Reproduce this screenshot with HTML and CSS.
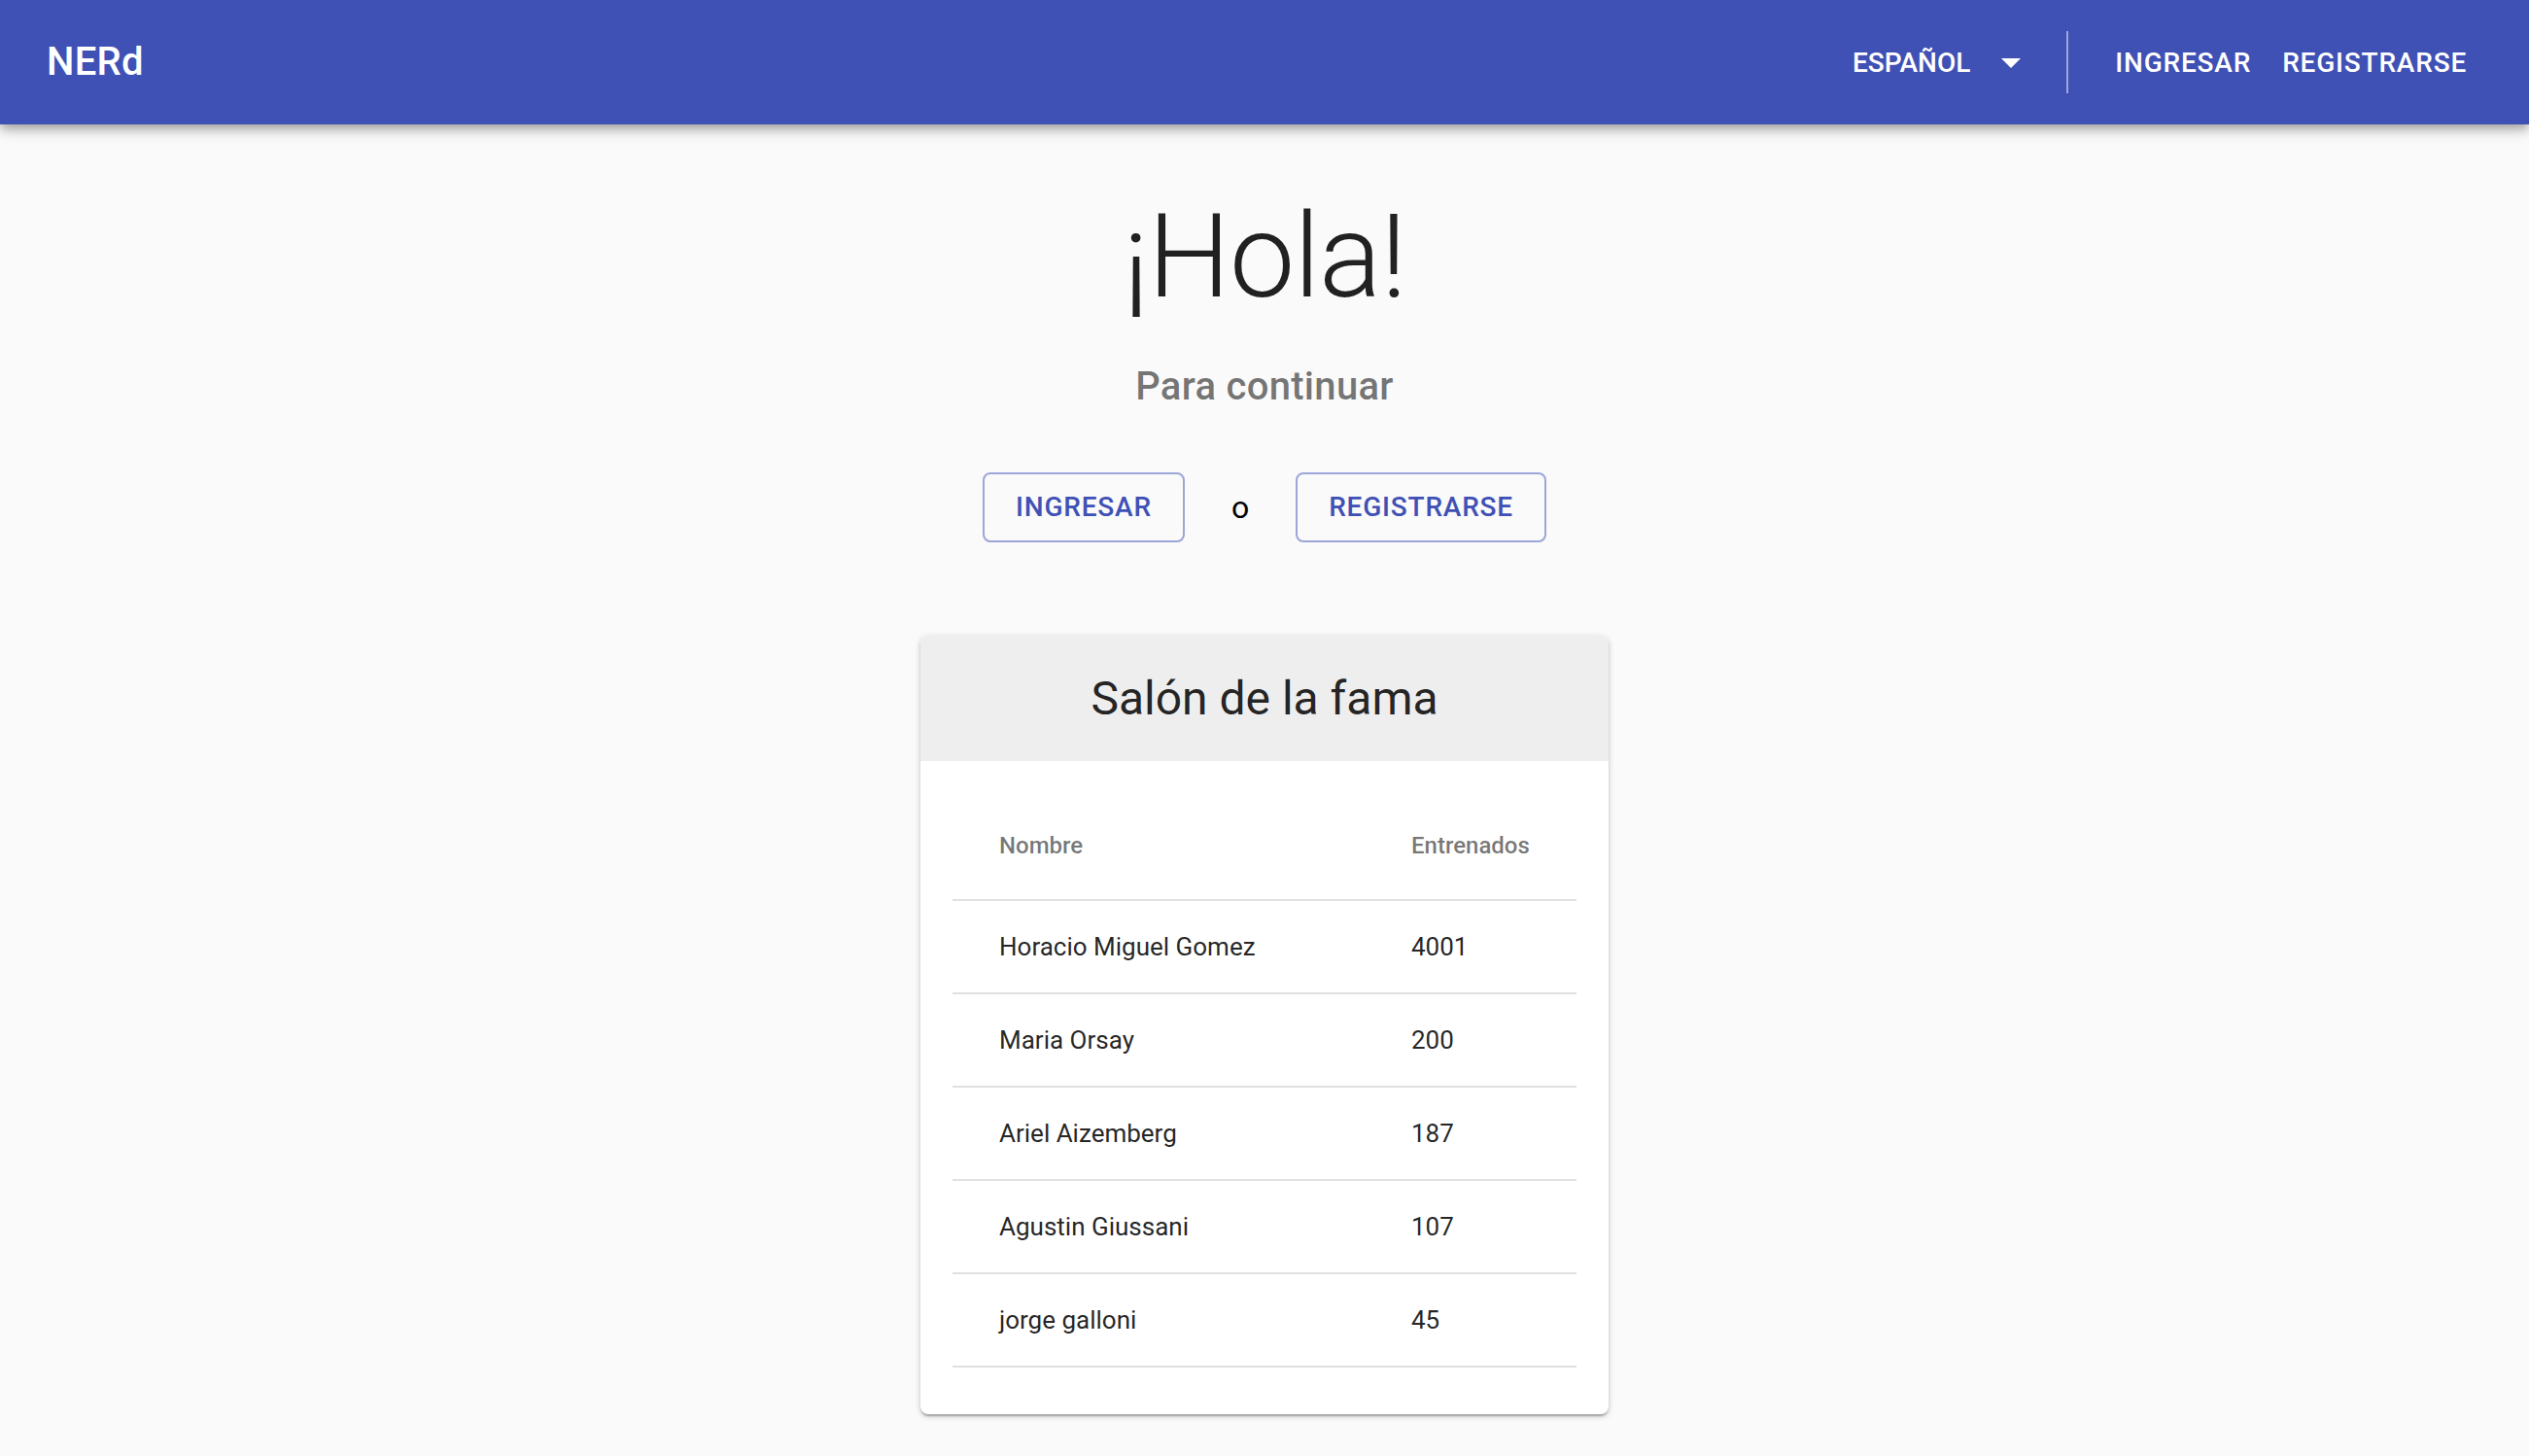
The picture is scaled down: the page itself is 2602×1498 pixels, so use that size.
FILE: index.html
```html
<!DOCTYPE html>
<html lang="es">
<head>
<meta charset="utf-8">
<title>NERd</title>
<link rel="stylesheet" href="styles.css">
</head>
<body>
<header class="appbar">
  <div class="logo">NERd</div>
  <nav class="actions">
    <div class="lang">
      <span class="lang-text">Español</span>
      <svg class="lang-icon" viewBox="0 0 24 24" width="48" height="48" aria-hidden="true"><path d="M7 10l5 5 5-5z" fill="#ffffff"/></svg>
    </div>
    <span class="divider"></span>
    <a class="nav-btn">Ingresar</a>
    <a class="nav-btn">Registrarse</a>
  </nav>
</header>
<main class="main">
  <h1 class="title">¡Hola!</h1>
  <p class="subtitle">Para continuar</p>
  <div class="cta">
    <a class="outlined-btn">Ingresar</a>
    <span class="or">o</span>
    <a class="outlined-btn">Registrarse</a>
  </div>
  <section class="card">
    <div class="card-head">Salón de la fama</div>
    <div class="card-body">
      <table class="fame">
        <colgroup><col class="col-name"><col class="col-num"></colgroup>
        <thead>
          <tr><th>Nombre</th><th>Entrenados</th></tr>
        </thead>
        <tbody>
          <tr><td>Horacio Miguel Gomez</td><td>4001</td></tr>
          <tr><td>Maria Orsay</td><td>200</td></tr>
          <tr><td>Ariel Aizemberg</td><td>187</td></tr>
          <tr><td>Agustin Giussani</td><td>107</td></tr>
          <tr><td>jorge galloni</td><td>45</td></tr>
        </tbody>
      </table>
    </div>
  </section>
</main>
</body>
</html>
```

FILE: styles.css
```css
* { box-sizing: border-box; }
html, body {
  margin: 0;
  padding: 0;
  background: #fafafa;
  font-family: Roboto, "Noto Sans", "Liberation Sans", sans-serif;
  color: rgba(0, 0, 0, 0.87);
}
.appbar {
  position: relative;
  z-index: 2;
  height: 128px;
  display: flex;
  align-items: center;
  padding: 0 48px 0 48px;
  background: #3f51b5;
  color: #fff;
  box-shadow: 0px 4px 8px -2px rgba(0,0,0,0.2), 0px 8px 10px 0px rgba(0,0,0,0.14), 0px 2px 20px 0px rgba(0,0,0,0.12);
}
.logo {
  font-size: 40px;
  font-weight: 500;
  letter-spacing: 0.0075em;
  line-height: 1.6;
}
.actions {
  margin-left: auto;
  display: flex;
  align-items: center;
}
.lang {
  display: flex;
  align-items: center;
}
.lang-text, .nav-btn {
  font-size: 28px;
  font-weight: 500;
  text-transform: uppercase;
  line-height: 1.75;
}
.nav-btn {
  letter-spacing: 0.02857em;
}
.lang-icon {
  display: block;
  margin-left: 18px;
}
.divider {
  display: block;
  width: 2px;
  height: 64px;
  background: rgba(255, 255, 255, 0.5);
  margin: 0 32px 0 33px;
}
.nav-btn {
  display: block;
  padding: 12px 16px;
  color: #fff;
  cursor: pointer;
}
.main {
  display: flex;
  flex-direction: column;
  align-items: center;
  padding-top: 64px;
  padding-bottom: 40px;
}
.title {
  margin: 0;
  font-size: 120px;
  font-weight: 300;
  line-height: 144px;
  letter-spacing: -0.00833em;
  color: rgba(0, 0, 0, 0.87);
}
.subtitle {
  margin: 30px 0 0;
  font-size: 40px;
  font-weight: 500;
  line-height: 64px;
  letter-spacing: 0.0075em;
  color: rgba(0, 0, 0, 0.54);
}
.cta {
  margin-top: 56px;
  display: flex;
  align-items: center;
}
.outlined-btn {
  display: block;
  padding: 10px 32px;
  border: 2px solid rgba(63, 81, 181, 0.5);
  border-radius: 8px;
  color: #3f51b5;
  font-size: 28px;
  font-weight: 500;
  letter-spacing: 0.02857em;
  text-transform: uppercase;
  line-height: 48px;
  cursor: pointer;
}
.or {
  margin: 0 48px;
  font-size: 32px;
  line-height: 48px;
  color: #000;
}
.card {
  margin-top: 96px;
  width: 708px;
  background: #fff;
  border-radius: 8px;
  overflow: hidden;
  box-shadow: 0px 2px 6px 0px rgba(0,0,0,0.2), 0px 2px 2px 0px rgba(0,0,0,0.14), 0px 4px 2px -2px rgba(0,0,0,0.12);
}
.card-head {
  background: #eeeeee;
  padding: 32px;
  text-align: center;
  font-size: 48px;
  font-weight: 400;
  line-height: 65px;
  color: rgba(0, 0, 0, 0.87);
}
.card-body {
  padding: 32px 33px 48px;
}
.fame {
  width: 100%;
  table-layout: fixed;
  border-collapse: separate;
  border-spacing: 0;
}
.col-name { width: 424px; }
.col-num { width: 218px; }
.fame th, .fame td {
  text-align: left;
  padding: 0 48px;
  border-bottom: 2px solid #e0e0e0;
  white-space: nowrap;
}
.fame th {
  font-size: 24px;
  font-weight: 500;
  line-height: 110px;
  color: rgba(0, 0, 0, 0.54);
}
.fame td {
  font-size: 26px;
  font-weight: 400;
  line-height: 94px;
  color: rgba(0, 0, 0, 0.87);
}
```
